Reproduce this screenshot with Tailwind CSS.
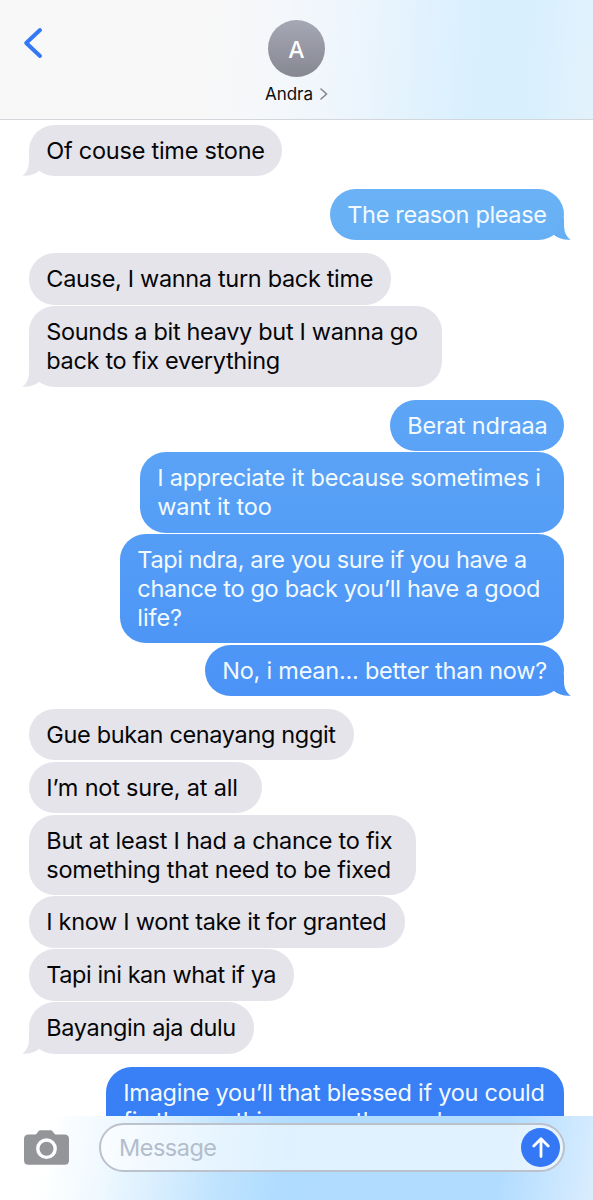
<!DOCTYPE html>
<html lang="en">
<head>
    <meta charset="UTF-8">
    <meta name="viewport" content="width=device-width, initial-scale=1.0">
    <title>Andra</title>
    <script src="https://cdn.jsdelivr.net/npm/@tailwindcss/browser@4"></script>
    <style>
        .bubble {
            padding: 12px 0 10.6px 17.3px;
            border-radius: 25.7px;
            white-space: nowrap;
        }
        .received { background: #e5e4eb; color: #060608; }
        /* one gradient for the whole screen, sent bubbles show their part of it */
        .sent {
            align-self: flex-end;
            color: #f3faff;
            background: linear-gradient(#73bbf6 0, #69b1f5 215px, #5ba4f6 430px, #4b93f6 690px, #397ff5 1080px, #377df5 1200px) fixed;
        }
    </style>
</head>
<body class="bg-white font-['Inter','Liberation_Sans',sans-serif] antialiased">
    <!-- Tail shape -->
    <svg class="hidden">
        <symbol id="tail" viewBox="0 0 24 24">
            <path d="M7 2V9C7 15.5 5 20.5.2 23.7C7 24.2 12.5 22.6 17.4 18.8L12 8V2Z" />
        </symbol>
    </svg>

    <div class="flex flex-col w-[593px] h-[1200px] overflow-hidden">
        <!-- Header -->
        <header class="h-[120px] shrink-0 flex justify-between border-b border-[#d3d6da] bg-[linear-gradient(94deg,#f8f8f8_34%,#f4f7fb_48%,#ecf5fd_60%,#e2f2fd_70%,#d8effe_80%,#d8effe_89%,#e2f2fc_99%)]">
            <div class="w-[100px] pl-[22px] pt-[26px]">
                <svg class="w-[22px] h-[34px]" viewBox="0 0 22 34" fill="none" stroke="#3478f6" stroke-width="4" stroke-linecap="round" stroke-linejoin="round">
                    <path d="M18 4L4.2 17L18 30" />
                </svg>
            </div>
            <div class="flex flex-col items-center pt-5">
                <div class="w-[57px] h-[57px] rounded-full bg-linear-to-b from-[#a6a8b5] to-[#868791] flex items-center justify-center pt-[3px] text-white text-[23px] font-medium">A</div>
                <div class="flex items-center gap-[7px] mt-[6px] text-[17px] leading-[22px] text-[#0c0d10]">
                    <span>Andra</span>
                    <svg class="w-[8px] h-[12px]" viewBox="0 0 8 12" fill="none" stroke="#85868c" stroke-width="1.6" stroke-linecap="round" stroke-linejoin="round">
                        <path d="M1 1L6.6 6L1 11" />
                    </svg>
                </div>
            </div>
            <div class="w-[100px]"></div>
        </header>

        <!-- Messages -->
        <main class="flex-1 min-h-0 overflow-hidden flex flex-col items-start pt-[4.7px] pl-[29px] pr-[29px] text-[23.5px] leading-[28.8px]">
            <div class="bubble received relative shrink-0 w-[253px]">
                <span class="tracking-[-0.25px]">Of couse time stone</span>
                <svg class="absolute left-[-7px] bottom-0 w-6 h-6 fill-[#e5e4eb]"><use href="#tail" /></svg>
            </div>

            <div class="bubble sent relative shrink-0 w-[234px] mt-[13px]">
                <span class="tracking-[-0.35px]">The reason please</span>
                <svg class="absolute right-[-7px] bottom-0 w-6 h-6 -scale-x-100 fill-[#67aff5]"><use href="#tail" /></svg>
            </div>

            <div class="bubble received shrink-0 w-[362px] mt-[13px]"><span class="tracking-[-0.33px]">Cause, I wanna turn back time</span></div>
            <div class="bubble received relative shrink-0 w-[413px] mt-[1.5px]">
                <span class="tracking-[-0.33px]">Sounds a bit heavy but I wanna go</span><br>
                <span class="tracking-[-0.33px]">back to fix everything</span>
                <svg class="absolute left-[-7px] bottom-0 w-6 h-6 fill-[#e5e4eb]"><use href="#tail" /></svg>
            </div>

            <div class="bubble sent shrink-0 w-[174px] mt-[13px]"><span class="tracking-[-0.16px]">Berat ndraaa</span></div>
            <div class="bubble sent shrink-0 w-[424px] mt-[1.5px]">
                <span class="tracking-[-0.24px]">I appreciate it because sometimes i</span><br>
                <span class="tracking-[-0.18px]">want it too</span>
            </div>
            <div class="bubble sent shrink-0 w-[444px] mt-[1.5px]">
                <span class="tracking-[-0.36px]">Tapi ndra, are you sure if you have a</span><br>
                <span class="tracking-[-0.31px]">chance to go back you’ll have a good</span><br>
                <span class="tracking-[-0.1px]">life?</span>
            </div>
            <div class="bubble sent relative shrink-0 w-[359px] mt-[1.5px]">
                <span class="tracking-[-0.24px]">No, i mean... better than now?</span>
                <svg class="absolute right-[-7px] bottom-0 w-6 h-6 -scale-x-100 fill-[#4b93f6]"><use href="#tail" /></svg>
            </div>

            <div class="bubble received shrink-0 w-[325px] mt-[13px]"><span class="tracking-[-0.35px]">Gue bukan cenayang nggit</span></div>
            <div class="bubble received shrink-0 w-[233px] mt-[1.5px]"><span class="tracking-[-0.2px]">I’m not sure, at all</span></div>
            <div class="bubble received shrink-0 w-[387px] mt-[1.5px]">
                <span class="tracking-[-0.26px]">But at least I had a chance to fix</span><br>
                <span class="tracking-[-0.24px]">something that need to be fixed</span>
            </div>
            <div class="bubble received shrink-0 w-[375.5px] mt-[1.5px]"><span class="tracking-[-0.31px]">I know I wont take it for granted</span></div>
            <div class="bubble received shrink-0 w-[264.5px] mt-[1.5px]"><span class="tracking-[-0.43px]">Tapi ini kan what if ya</span></div>
            <div class="bubble received relative shrink-0 w-[224.5px] mt-[1.5px]">
                <span class="tracking-[-0.35px]">Bayangin aja dulu</span>
                <svg class="absolute left-[-7px] bottom-0 w-6 h-6 fill-[#e5e4eb]"><use href="#tail" /></svg>
            </div>

            <div class="bubble sent shrink-0 w-[458px] mt-[13px]">
                <span class="tracking-[-0.26px]">Imagine you’ll that blessed if you could</span><br>
                <span class="tracking-[-0.35px]">fix the anything once the peek</span>
            </div>
        </main>

        <!-- Message input -->
        <footer class="h-[84.5px] shrink-0 flex items-start bg-[linear-gradient(100deg,#ffffff_8%,#f0f9ff_18%,#d8eefe_28%,#bfe3fe_38%,#b0dcff_48%,#b2dcff_84%,#c6e5ff_92%,#d8ecfe_99%)]">
            <svg class="ml-6 mt-[14.5px] w-[45px] h-[35px] shrink-0" viewBox="0 0 45 35">
                <path fill="#949598" d="M4.5 4.5H10.5C12 4.5 12.6 3.8 13.5 2.4C14.5 .7 15.3 .2 17 .2H26C27.7 .2 28.5 .7 29.5 2.4C30.4 3.8 31 4.5 32.5 4.5H40.5Q45 4.5 45 9V30.3Q45 34.8 40.5 34.8H4.5Q0 34.8 0 30.3V9Q0 4.5 4.5 4.5Z" />
                <circle cx="22.5" cy="18.7" r="8.7" fill="none" stroke="#fbfdff" stroke-width="3.4" />
            </svg>
            <div class="ml-[30px] mt-[7.5px] w-[465.5px] h-[49px] rounded-full border-2 border-[#bcc2cb] bg-white/60 flex items-center justify-between pl-[18px] pr-[2.5px]">
                <span class="text-[23.5px] text-[#b3bdcb] tracking-[-0.5px] pt-px">Message</span>
                <div class="w-[39px] h-[39px] rounded-full bg-[#3478f6] flex items-center justify-center">
                    <svg class="w-[18px] h-[21px]" viewBox="0 0 18 21" fill="none" stroke="#fff" stroke-width="2.8" stroke-linecap="round" stroke-linejoin="round">
                        <path d="M9 19.5V2M1.8 9L9 1.8L16.2 9" />
                    </svg>
                </div>
            </div>
        </footer>
    </div>
</body>
</html>
